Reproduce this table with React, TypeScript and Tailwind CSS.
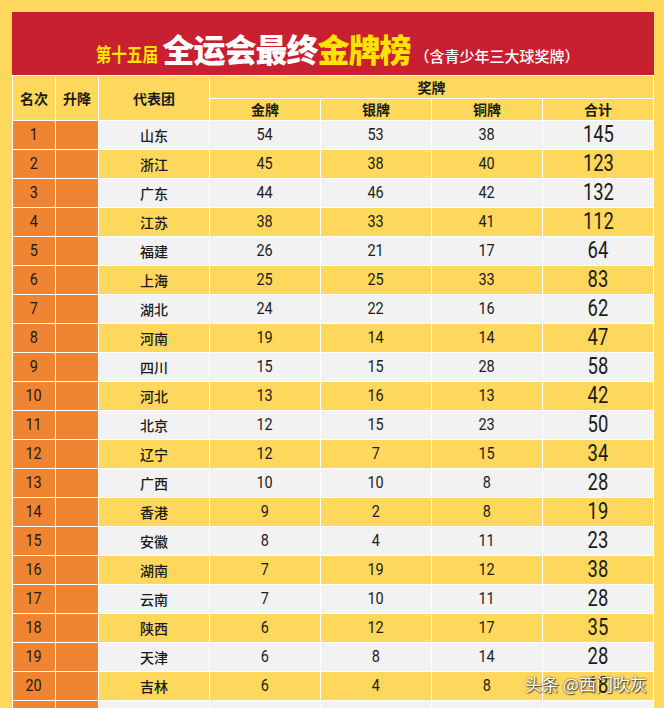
import React from "react";

const rows: [string, number, number, number, number][] = [
  ["山东", 54, 53, 38, 145],
  ["浙江", 45, 38, 40, 123],
  ["广东", 44, 46, 42, 132],
  ["江苏", 38, 33, 41, 112],
  ["福建", 26, 21, 17, 64],
  ["上海", 25, 25, 33, 83],
  ["湖北", 24, 22, 16, 62],
  ["河南", 19, 14, 14, 47],
  ["四川", 15, 15, 28, 58],
  ["河北", 13, 16, 13, 42],
  ["北京", 12, 15, 23, 50],
  ["辽宁", 12, 7, 15, 34],
  ["广西", 10, 10, 8, 28],
  ["香港", 9, 2, 8, 19],
  ["安徽", 8, 4, 11, 23],
  ["湖南", 7, 19, 12, 38],
  ["云南", 7, 10, 11, 28],
  ["陕西", 6, 12, 17, 35],
  ["天津", 6, 8, 14, 28],
  ["吉林", 6, 4, 8, 18],
];

const cjk = "font-['Noto_Sans_CJK_SC',sans-serif]";
const num = "font-['Roboto','Noto_Sans_CJK_SC',sans-serif]";

function Row({ i, r }: { i: number; r?: [string, number, number, number, number] }) {
  const bg = i % 2 === 0 ? "bg-[#F2F2F2]" : "bg-[#FDD85C]";
  const cell = `${bg} h-[28px] flex items-center justify-center text-[#1b1b1b]`;
  return (
    <>
      <div className={`bg-[#EF8432] h-[28px] flex items-center justify-center text-[#1b1b1b] text-[17px] ${num}`}>
        {r ? <span className="inline-block scale-x-[0.85]">{i + 1}</span> : null}
      </div>
      <div className="bg-[#EF8432] h-[28px]" />
      <div className={`${cell} text-[14px] font-medium ${cjk}`}>{r ? r[0] : ""}</div>
      <div className={`${cell} text-[17px] ${num}`}>
        {r ? <span className="inline-block scale-x-[0.85]">{r[1]}</span> : null}
      </div>
      <div className={`${cell} text-[17px] ${num}`}>
        {r ? <span className="inline-block scale-x-[0.85]">{r[2]}</span> : null}
      </div>
      <div className={`${cell} text-[17px] ${num}`}>
        {r ? <span className="inline-block scale-x-[0.85]">{r[3]}</span> : null}
      </div>
      <div className={`${cell} text-[23px] ${num}`}>
        {r ? <span className="inline-block scale-x-[0.8]">{r[4]}</span> : null}
      </div>
    </>
  );
}

export default function App() {
  return (
    <div className="relative w-[664px] h-[708px] overflow-hidden bg-[#FDD85C] pt-[12px] pl-[12px]">
      <div className="w-[642px] h-[63px] bg-[#C81F31] flex items-end justify-center pb-[11px] pl-[10px]">
        <span className={`inline-block origin-right scale-x-[0.82] -ml-[14px] text-[#FFE400] text-[19px] font-bold leading-none mb-[1px] ${cjk}`}>第十五届</span>
        <span className={`text-white text-[32px] font-black leading-none ml-[4px] tracking-[-1px] ${cjk}`}>全运会最终</span>
        <span className={`text-[#FFE400] text-[32px] font-black leading-none tracking-[-1px] ${cjk}`}>金牌榜</span>
        <span className={`text-white text-[15px] font-medium leading-none ml-[4px] mb-[1px] ${cjk}`}>（含青少年三大球奖牌）</span>
      </div>
      <div className="w-[642px] bg-white p-px grid grid-cols-[42px_42px_110px_110px_110px_110px_110px] gap-px">
        <div className={`row-span-2 bg-[#FDD85C] flex items-center justify-center text-[14px] font-bold text-[#1b1b1b] ${cjk}`}>名次</div>
        <div className={`row-span-2 bg-[#FDD85C] flex items-center justify-center text-[14px] font-bold text-[#1b1b1b] ${cjk}`}>升降</div>
        <div className={`row-span-2 bg-[#FDD85C] flex items-center justify-center text-[14px] font-bold text-[#1b1b1b] ${cjk}`}>代表团</div>
        <div className={`col-span-4 h-[22px] bg-[#FDD85C] flex items-center justify-center text-[14px] font-bold text-[#1b1b1b] ${cjk}`}>奖牌</div>
        {["金牌", "银牌", "铜牌", "合计"].map((t) => (
          <div key={t} className={`h-[21px] bg-[#FDD85C] flex items-center justify-center text-[14px] font-bold text-[#1b1b1b] ${cjk}`}>{t}</div>
        ))}
        {rows.map((r, i) => (
          <Row key={i} i={i} r={r} />
        ))}
        <Row i={20} />
      </div>
      <div className={`absolute left-[525px] top-[675px] text-white text-[17px] leading-none [text-shadow:0_0_2px_rgba(0,0,0,0.8),1px_1px_1px_rgba(0,0,0,0.6)] ${cjk}`}>
        头条 @西门吹灰
      </div>
    </div>
  );
}
